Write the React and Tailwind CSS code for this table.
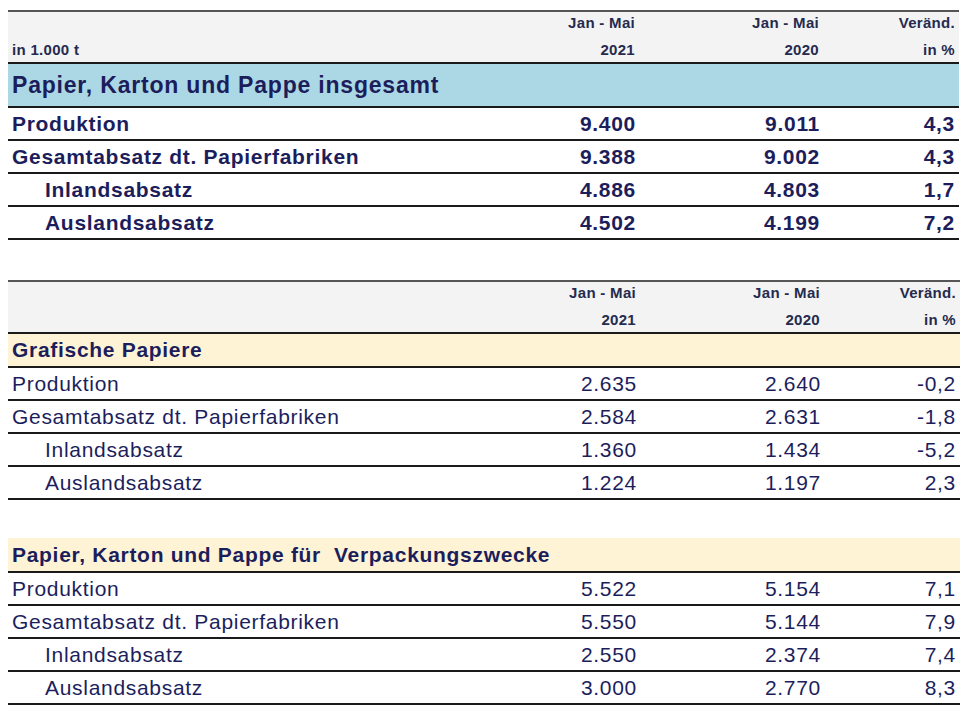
const FONT = { fontFamily: '"Liberation Sans", Arial, sans-serif' };

const totals = [
  { label: "Produktion", a: "9.400", b: "9.011", c: "4,3" },
  { label: "Gesamtabsatz dt. Papierfabriken", a: "9.388", b: "9.002", c: "4,3" },
  { label: "Inlandsabsatz", a: "4.886", b: "4.803", c: "1,7", indent: true },
  { label: "Auslandsabsatz", a: "4.502", b: "4.199", c: "7,2", indent: true },
];

const grafisch = [
  { label: "Produktion", a: "2.635", b: "2.640", c: "-0,2" },
  { label: "Gesamtabsatz dt. Papierfabriken", a: "2.584", b: "2.631", c: "-1,8" },
  { label: "Inlandsabsatz", a: "1.360", b: "1.434", c: "-5,2", indent: true },
  { label: "Auslandsabsatz", a: "1.224", b: "1.197", c: "2,3", indent: true },
];

const verpackung = [
  { label: "Produktion", a: "5.522", b: "5.154", c: "7,1" },
  { label: "Gesamtabsatz dt. Papierfabriken", a: "5.550", b: "5.144", c: "7,9" },
  { label: "Inlandsabsatz", a: "2.550", b: "2.374", c: "7,4", indent: true },
  { label: "Auslandsabsatz", a: "3.000", b: "2.770", c: "8,3", indent: true },
];

const cols = "grid grid-cols-[1fr_185px_184px_135px]";

function HeaderBlock({ unit }) {
  return (
    <div className={`${cols} border-t-2 border-b-2 border-t-[#555] border-b-[#1a1a1a] bg-[#f3f3f3] h-[54px] text-[15px] font-bold tracking-[0.3px] text-[#252b4e]`}>
      <div className="flex items-end pl-[4px] pb-[2px] leading-[20px]">{unit}</div>
      {[
        ["Jan - Mai", "2021"],
        ["Jan - Mai", "2020"],
        ["Veränd.", "in %"],
      ].map(([top, bottom], i) => (
        <div
          key={i}
          className={`flex flex-col items-end justify-between pt-[1px] pb-[2px] leading-[20px] ${i === 2 ? "pr-[4px]" : "pr-[5px]"}`}
        >
          <span>{top}</span>
          <span>{bottom}</span>
        </div>
      ))}
    </div>
  );
}

function DataRow({ row, bold }) {
  return (
    <div
      className={`${cols} h-[33px] border-b-2 border-[#1a1a1a] text-[21px] tracking-[0.7px] text-[#1c1e5c] ${bold ? "font-bold" : ""}`}
    >
      <div className={`flex items-center ${row.indent ? "pl-[37px]" : "pl-[4px]"}`}>
        {row.label}
      </div>
      <div className="flex items-center justify-end pr-[4px]">{row.a}</div>
      <div className="flex items-center justify-end pr-[4px]">{row.b}</div>
      <div className="flex items-center justify-end pr-[4px]">{row.c}</div>
    </div>
  );
}

function Band({ title, className }) {
  return (
    <div
      className={`flex items-center border-b-2 border-[#1a1a1a] pl-[4px] font-bold text-[#1c1e5c] ${className}`}
    >
      {title}
    </div>
  );
}

export default function App() {
  return (
    <div className="min-h-[720px] bg-white pt-[10px]" style={FONT}>
      <div className="ml-[8px] w-[951px]">
        <HeaderBlock unit="in 1.000 t" />
        <Band
          title="Papier, Karton und Pappe insgesamt"
          className="h-[44px] bg-[#acd8e5] text-[23px] tracking-[0.8px]"
        />
        {totals.map((r) => (
          <DataRow key={r.label} row={r} bold />
        ))}
      </div>

      <div className="ml-[8px] mt-[40px] w-[952px]">
        <HeaderBlock unit="" />
        <Band
          title="Grafische Papiere"
          className="h-[34px] bg-[#fff3d6] text-[21px] tracking-[0.7px]"
        />
        {grafisch.map((r) => (
          <DataRow key={r.label} row={r} />
        ))}
      </div>

      <div className="ml-[8px] mt-[38px] w-[952px]">
        <Band
          title={"Papier, Karton und Pappe für\u00a0 Verpackungszwecke"}
          className="h-[35px] bg-[#fff3d6] text-[21px] tracking-[0.7px]"
        />
        {verpackung.map((r) => (
          <DataRow key={r.label} row={r} />
        ))}
      </div>
    </div>
  );
}
